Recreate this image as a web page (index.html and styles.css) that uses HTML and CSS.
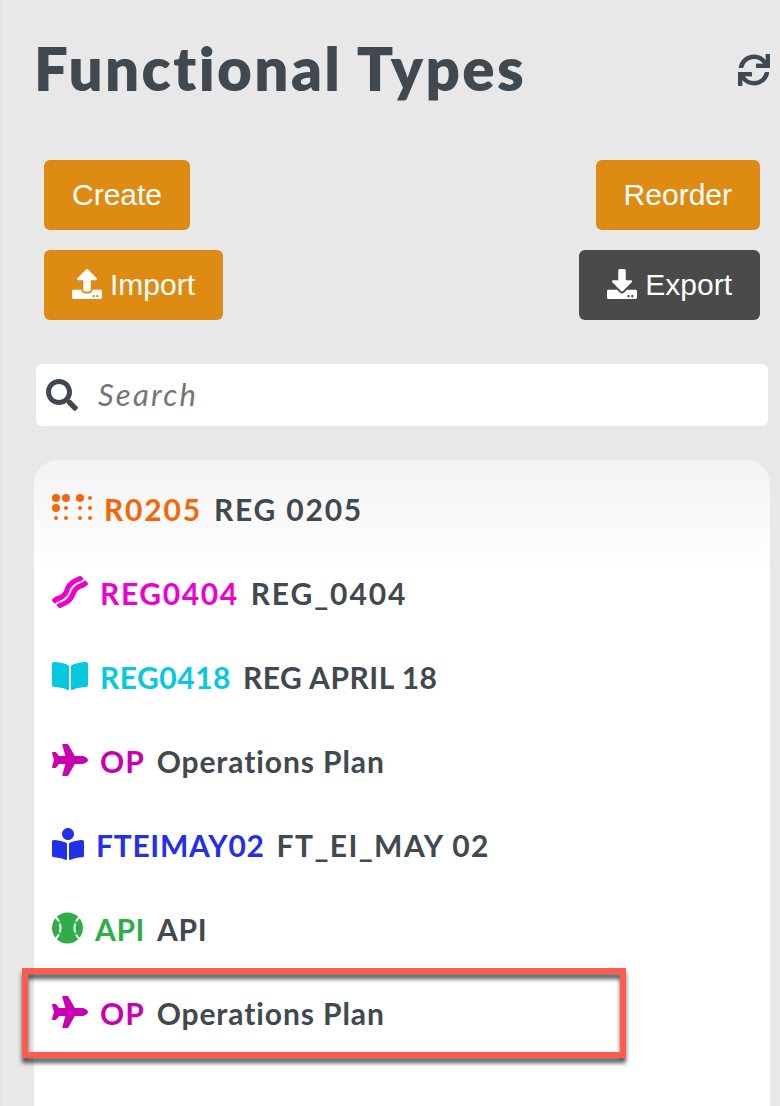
FILE: index.html
```html
<!DOCTYPE html>
<html lang="en">
<head>
  <meta charset="UTF-8">
  <title>Functional Types</title>
  <link rel="stylesheet" href="styles.css">
</head>
<body>

  <div class="page">
    <div class="header">
      <h1>Functional Types</h1>
      <svg class="refresh" viewBox="0 0 512 512"><path d="M440.65 12.57l4 82.77A247.16 247.16 0 0 0 255.83 8C134.73 8 33.91 94.92 12.29 209.82A12 12 0 0 0 24.09 224h49.05a12 12 0 0 0 11.67-9.26 175.91 175.91 0 0 1 317-56.94l-101.46-4.86a12 12 0 0 0-12.57 12v47.41a12 12 0 0 0 12 12H500a12 12 0 0 0 12-12V12a12 12 0 0 0-12-12h-47.37a12 12 0 0 0-11.98 12.57zM255.83 432a175.61 175.61 0 0 1-146-77.8l101.8 4.87a12 12 0 0 0 12.57-12v-47.4a12 12 0 0 0-12-12H12a12 12 0 0 0-12 12V500a12 12 0 0 0 12 12h47.35a12 12 0 0 0 12-12.6l-4.15-82.57A247.17 247.17 0 0 0 255.83 504c121.11 0 221.93-86.92 243.55-201.82a12 12 0 0 0-11.8-14.18h-49.05a12 12 0 0 0-11.67 9.26A175.86 175.86 0 0 1 255.83 432z"/></svg>
    </div>

    <div class="actions">
      <button class="btn">Create</button>
      <button class="btn">Reorder</button>
    </div>
    <div class="actions">
      <button class="btn">
        <svg viewBox="0 0 512 512"><path d="M296 384h-80c-13.3 0-24-10.7-24-24V192h-87.7c-17.8 0-26.7-21.5-14.1-34.1L242.3 5.7c7.5-7.5 19.8-7.5 27.3 0l152.2 152.2c12.6 12.6 3.7 34.1-14.1 34.1H320v168c0 13.3-10.7 24-24 24zm216-8v112c0 13.3-10.7 24-24 24H24c-13.3 0-24-10.7-24-24V376c0-13.3 10.7-24 24-24h136v8c0 30.9 25.1 56 56 56h80c30.9 0 56-25.1 56-56v-8h136c13.3 0 24 10.7 24 24zm-124 88c0-11-9-20-20-20s-20 9-20 20 9 20 20 20 20-9 20-20zm64 0c0-11-9-20-20-20s-20 9-20 20 9 20 20 20 20-9 20-20z"/></svg>
        Import
      </button>
      <button class="btn btn-dark">
        <svg viewBox="0 0 512 512"><path d="M216 0h80c13.3 0 24 10.7 24 24v168h87.7c17.8 0 26.7 21.5 14.1 34.1L269.7 378.3c-7.5 7.5-19.8 7.5-27.3 0L90.1 226.1c-12.6-12.6-3.7-34.1 14.1-34.1H192V24c0-13.3 10.7-24 24-24zm296 376v112c0 13.3-10.7 24-24 24H24c-13.3 0-24-10.7-24-24V376c0-13.3 10.7-24 24-24h146.7l49 49c20.1 20.1 52.5 20.1 72.6 0l49-49H488c13.3 0 24 10.7 24 24zm-124 88c0-11-9-20-20-20s-20 9-20 20 9 20 20 20 20-9 20-20zm64 0c0-11-9-20-20-20s-20 9-20 20 9 20 20 20 20-9 20-20z"/></svg>
        Export
      </button>
    </div>

    <div class="search">
      <svg viewBox="0 0 512 512"><path d="M505 442.7L405.3 343c-4.5-4.5-10.6-7-17-7H372c27.6-35.3 44-79.7 44-128C416 93.1 322.9 0 208 0S0 93.1 0 208s93.1 208 208 208c48.3 0 92.7-16.4 128-44v16.3c0 6.4 2.5 12.5 7 17l99.7 99.7c9.4 9.4 24.6 9.4 33.9 0l28.3-28.3c9.4-9.4 9.4-24.6.1-34zM208 336c-70.7 0-128-57.2-128-128 0-70.7 57.2-128 128-128 70.7 0 128 57.2 128 128 0 70.7-57.2 128-128 128z"/></svg>
      <input type="text" placeholder="Search">
    </div>

    <div class="list">
      <div class="item orange">
        <svg class="w40" viewBox="0 0 640 512">
          <circle cx="64" cy="96" r="64"/><circle cx="224" cy="96" r="64"/><circle cx="448" cy="96" r="64"/><circle cx="64" cy="256" r="64"/>
          <circle cx="608" cy="96" r="32"/><circle cx="224" cy="256" r="32"/><circle cx="448" cy="256" r="32"/><circle cx="608" cy="256" r="32"/>
          <circle cx="64" cy="416" r="32"/><circle cx="224" cy="416" r="32"/><circle cx="448" cy="416" r="32"/><circle cx="608" cy="416" r="32"/>
        </svg>
        <span class="code">R0205</span><span class="name">REG 0205</span>
      </div>
      <div class="item pink">
        <svg class="w36" viewBox="0 0 576 512"><path d="M218.92 336.39c34.89-34.89 44.2-59.7 54.05-86 10.61-28.29 21.59-57.54 61.37-97.34s69.05-50.73 97.35-61.32c23.88-9 46.59-17.81 76.83-45.37L470.66 8.43a31 31 0 0 0-40.18-2.83c-13.64 10.1-25.15 14.39-41 20.3C247 79.52 209.26 191.29 200.65 214.1c-29.75 78.83-89.55 94.68-98.72 98.09-24.86 9.26-54.73 20.38-91.07 50.36C-3 374-3.63 395 9.07 407.61l35.76 35.51C80 410.52 107 400.15 133.39 390.1c26.27-9.84 50.6-18.83 85.53-53.71zm348-232l-35.75-35.51c-35.19 32.63-62.18 43-88.25 52.79-26.26 9.85-51.06 19.16-85.95 54s-44.19 59.69-54 86C292.33 290 281.34 319.22 241.55 359s-69 50.73-97.3 61.32c-23.86 9-46.61 17.66-76.72 45.33l37.68 37.93a31 31 0 0 0 40.18 2.82c13.6-10.06 25.09-14.34 40.94-20.24 142.2-53.44 180-165.1 188.69-188.09 29.75-78.83 89.55-94.68 98.72-98.09 24.86-9.26 54.73-20.38 91.07-50.37 13.89-11.43 14.81-32.53 2.11-45.19z"/></svg>
        <span class="code">REG0404</span><span class="name">REG_0404</span>
      </div>
      <div class="item cyan">
        <svg class="w36" viewBox="0 0 576 512"><path d="M542.22 32.05c-54.8 3.11-163.72 14.43-230.96 55.59-4.64 2.84-7.27 7.89-7.27 13.17v363.87c0 11.55 12.63 18.85 23.28 13.49 69.18-34.82 169.23-44.32 218.7-46.92 16.89-.89 30.02-14.43 30.02-30.66V62.75c.01-17.71-15.35-31.74-33.77-30.7zM264.73 87.64C197.5 46.48 88.58 35.17 33.78 32.05 15.36 31.01 0 45.04 0 62.75V400.6c0 16.24 13.13 29.78 30.02 30.66 49.49 2.6 149.59 12.11 218.77 46.95 10.62 5.35 23.21-1.94 23.21-13.46V100.63c0-5.29-2.62-10.14-7.27-12.99z"/></svg>
        <span class="code">REG0418</span><span class="name">REG APRIL 18</span>
      </div>
      <div class="item magenta">
        <svg class="w36" viewBox="0 0 576 512"><path d="M480 192H365.71L260.61 8.06A16.014 16.014 0 0 0 246.71 0h-65.5c-10.63 0-18.3 10.17-15.38 20.39L214.86 192H112l-43.2-57.6c-3.02-4.03-7.77-6.4-12.8-6.4H16.01C5.6 128-2.04 137.78.49 147.88L32 256 .49 364.12C-2.04 374.22 5.6 384 16.01 384H56c5.04 0 9.78-2.37 12.8-6.4L112 320h102.86l-49.03 171.6c-2.92 10.22 4.75 20.4 15.38 20.4h65.5c5.74 0 11.04-3.08 13.89-8.06L365.71 320H480c35.35 0 96-28.65 96-64s-60.65-64-96-64z"/></svg>
        <span class="code">OP</span><span class="name">Operations Plan</span>
      </div>
      <div class="item blue">
        <svg class="w32" viewBox="0 0 512 512"><path d="M352 96c0-53.02-42.98-96-96-96s-96 42.98-96 96 42.98 96 96 96 96-42.98 96-96zM233.59 241.1c-59.33-36.32-155.43-46.3-203.79-49.05C13.55 191.13 0 203.51 0 219.14v222.8c0 14.33 11.59 26.28 26.49 27.05 43.66 2.29 131.99 10.68 193.04 41.43 9.37 4.72 20.48-1.71 20.48-11.87V252.56c-.01-4.67-2.32-8.95-6.42-11.46zm248.61-49.05c-48.35 2.74-144.46 12.73-203.78 49.05-4.1 2.51-6.41 6.96-6.41 11.63v245.79c0 10.19 11.14 16.63 20.54 11.9 61.04-30.72 149.32-39.11 192.97-41.4 14.9-.78 26.49-12.73 26.49-27.06V219.14c-.01-15.63-13.56-28.01-29.81-27.09z"/></svg>
        <span class="code">FTEIMAY02</span><span class="name">FT_EI_MAY 02</span>
      </div>
      <div class="item green">
        <svg class="w31" viewBox="0 0 496 512"><path d="M368.5 363.9l28.8-13.9c11.1 22.9 26 43.2 44.1 60.9 34-42.5 54.5-96.3 54.5-154.9 0-58.5-20.4-112.2-54.2-154.6-17.8 17.3-32.6 37.1-43.6 59.5l-28.7-14.1c12.8-26 30-49 50.8-69C375.6 34.7 315 8 248 8 181.1 8 120.5 34.6 75.9 77.7c20.7 19.9 37.9 42.9 50.7 68.8l-28.7 14.1c-11-22.3-25.7-42.1-43.5-59.4C20.4 143.7 0 197.4 0 256c0 58.6 20.4 112.3 54.4 154.7 18.2-17.7 33.2-38 44.3-61l28.8 13.9c-12.9 26.7-30.3 50.3-51.5 70.7 44.5 43.1 105.1 69.7 172 69.7 66.8 0 127.3-26.5 171.9-69.5-21.1-20.4-38.5-43.9-51.4-70.6zm-228.3-32l-30.5-9.8c14.9-46.4 12.7-93.8-.6-134l30.4-10c15 45.6 18 99.9.7 153.8zm216.3-153.4l30.4 10c-13.2 40.1-15.5 87.5-.6 134l-30.5 9.8c-17.3-54-14.3-108.3.7-153.8z"/></svg>
        <span class="code">API</span><span class="name">API</span>
      </div>
      <div class="item magenta">
        <svg class="w36" viewBox="0 0 576 512"><path d="M480 192H365.71L260.61 8.06A16.014 16.014 0 0 0 246.71 0h-65.5c-10.63 0-18.3 10.17-15.38 20.39L214.86 192H112l-43.2-57.6c-3.02-4.03-7.77-6.4-12.8-6.4H16.01C5.6 128-2.04 137.78.49 147.88L32 256 .49 364.12C-2.04 374.22 5.6 384 16.01 384H56c5.04 0 9.78-2.37 12.8-6.4L112 320h102.86l-49.03 171.6c-2.92 10.22 4.75 20.4 15.38 20.4h65.5c5.74 0 11.04-3.08 13.89-8.06L365.71 320H480c35.35 0 96-28.65 96-64s-60.65-64-96-64z"/></svg>
        <span class="code">OP</span><span class="name">Operations Plan</span>
        <div class="highlight"></div>
      </div>
    </div>
  </div>

</body>
</html>
```
FILE: styles.css
```css
* {
  box-sizing: border-box;
}

body {
  margin: 0;
  height: 1106px;
  overflow: hidden;
  background: #e8e8e8;
  color: #404950;
  font-family: Lato, "Liberation Sans", sans-serif;
}

.page {
  height: 1106px;
  display: flex;
  flex-direction: column;
  padding: 0 10px 0 32px;
  border-left: 2px solid #e4e4e4;
}

svg {
  fill: currentColor;
  flex: none;
}

.header {
  display: flex;
  align-items: center;
  justify-content: space-between;
  height: 140px;
  margin-bottom: 20px;
}

h1 {
  margin: 0 0 4px;
  font-size: 60px;
  font-weight: 800;
  line-height: 72px;
  letter-spacing: 2.4px;
}

.refresh {
  width: 32px;
  height: 32px;
}

.actions {
  display: flex;
  justify-content: space-between;
  margin: 0 10px 20px;
}

.btn {
  display: flex;
  align-items: center;
  gap: 8px;
  height: 70px;
  padding: 0 28px;
  border: none;
  border-radius: 6px;
  background: #dd8b13;
  color: white;
  font-family: "Liberation Sans", Arial, sans-serif;
  font-size: 30px;
  cursor: pointer;
}

.btn svg {
  width: 30px;
  height: 30px;
  margin-bottom: 2px;
}

.btn-dark {
  background: #4a4a4a;
}

.search {
  display: flex;
  align-items: center;
  height: 62px;
  margin: 24px 2px 34px;
  padding-left: 10px;
  border-radius: 6px;
  background: white;
}

.search svg {
  width: 32px;
  height: 32px;
}

.search input {
  flex: 1;
  min-width: 0;
  height: 62px;
  padding: 0 20px 2px;
  border: none;
  outline: none;
  background: none;
  font-family: inherit;
  font-size: 31px;
  font-style: italic;
  letter-spacing: 2.2px;
}

.search input::placeholder {
  color: #757575;
}

.list {
  flex: 1;
  padding: 8px 18px 0;
  border-radius: 24px 24px 0 0;
  background: linear-gradient(#f3f3f3, white 112px) white;
}

.item {
  position: relative;
  display: flex;
  align-items: center;
  height: 84px;
  font-size: 30px;
  font-weight: 700;
  white-space: pre;
}

.item svg {
  height: 32px;
  margin-right: 12px;
  margin-bottom: 4px;
}

.item span {
  margin-bottom: 2px;
}

.w31 { width: 31px; }
.w32 { width: 32px; }
.w36 { width: 36px; }
.w40 { width: 40px; }

.name {
  margin-left: 12px;
  color: #404950;
}

.orange { color: #f7650b; letter-spacing: 1.8px; }
.pink { color: #ee00d0; letter-spacing: 1.6px; }
.pink .name { letter-spacing: 1.9px; }
.cyan { color: #08c8e0; letter-spacing: 0.5px; }
.magenta { color: #c800b0; letter-spacing: 0.9px; }
.blue { color: #2430e8; letter-spacing: 0.7px; }
.blue .name { letter-spacing: 1.4px; }
.green { color: #30ad49; letter-spacing: 0.6px; }

.highlight {
  position: absolute;
  top: -4px;
  left: -30px;
  width: 604px;
  height: 90px;
  border: 6px solid #ff5b4e;
  filter: drop-shadow(0 5px 2px rgba(0, 0, 0, 0.65));
}
```
